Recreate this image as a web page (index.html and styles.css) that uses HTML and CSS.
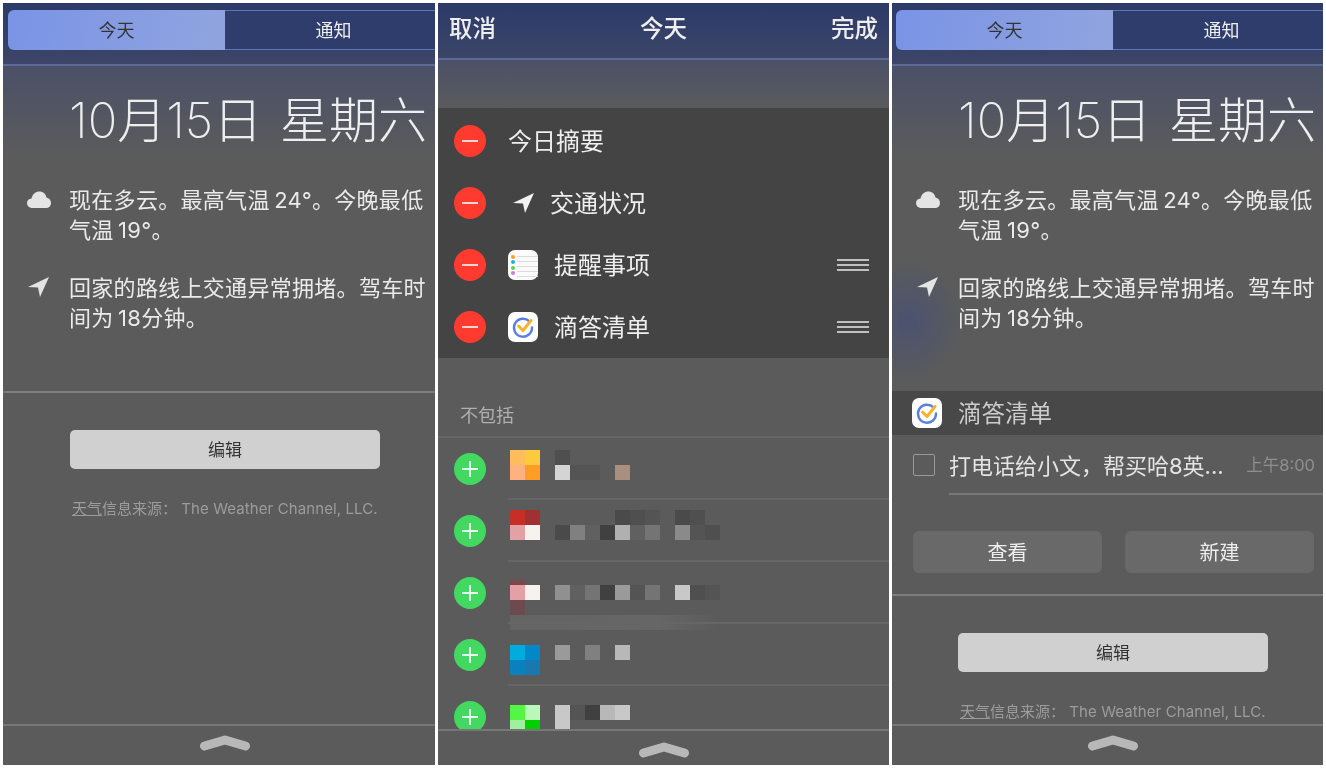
FILE: index.html
```html
<!DOCTYPE html>
<html lang="zh-CN">
    <head>
        <meta charset="UTF-8" />
        <meta name="viewport" content="width=device-width, initial-scale=1.0" />
        <link rel="stylesheet" href="styles.css">
        <title>今天</title>
    </head>
    <body>
        <svg class="defs" aria-hidden="true">
            <symbol id="arrow" viewBox="0 0 22 22"><path d="M22 1 L1 11 L11 11.5 L13 21 Z" /></symbol>
            <symbol id="cloud" viewBox="0 0 24 17"><path d="M6 17 C2.5 17 0 15 0 12 C0 9.5 2 7.6 4.5 7.5 C5.5 3 8.8 0.5 12.5 0.5 C16 0.5 18.8 2.8 19.5 6.5 C22 7 24 9 24 12 C24 15 21.8 17 19 17 Z" /></symbol>
            <symbol id="chevron" viewBox="0 0 52 17"><path d="M5.5 12 L26 6 L46.5 12" fill="none" stroke="#b8b8b8" stroke-width="9" stroke-linecap="round" stroke-linejoin="round" /></symbol>
            <symbol id="minus" viewBox="0 0 32 32"><circle cx="16" cy="16" r="16" fill="#ff3b30" /><rect x="8" y="15" width="16" height="2" fill="#ffd6d2" /></symbol>
            <symbol id="plus" viewBox="0 0 32 32"><circle cx="16" cy="16" r="16" fill="#43d85f" /><path d="M16 8 V24 M8 16 H24" stroke="#e6fbe9" stroke-width="2" /></symbol>
            <symbol id="ticktick" viewBox="0 0 30 30">
                <rect width="30" height="30" rx="7" fill="#fff" />
                <path d="M21.5 9.5 A9 9 0 1 0 24 15.5" fill="none" stroke="#5b7fe0" stroke-width="2.4" stroke-linecap="round" />
                <path d="M10.5 14 L15 18.5 L23 8.5" fill="none" stroke="#f7b329" stroke-width="3" stroke-linecap="round" stroke-linejoin="round" />
            </symbol>
            <symbol id="reminders" viewBox="0 0 30 30">
                <rect width="30" height="30" rx="7" fill="#fbfbfb" />
                <path d="M9 6.5 H30 M9 11.5 H30 M9 16.5 H30 M9 21.5 H30 M9 26.5 H30" stroke="#dcdcdc" stroke-width="1" />
                <circle cx="5" cy="7" r="2" fill="#ff9f1a" />
                <circle cx="5" cy="12" r="2" fill="#2aa8f2" />
                <circle cx="5" cy="18" r="2" fill="#5fd34a" />
                <circle cx="5" cy="23" r="2" fill="#cf7be0" />
            </symbol>
        </svg>

        <!-- today view -->
        <section class="panel">
            <header class="tabs-bar">
                <div class="tabs">
                    <div class="tab active">今天</div>
                    <div class="tab">通知</div>
                </div>
            </header>
            <h1 class="date">10月15日 星期六</h1>
            <div class="summary">
                <div class="summary-row">
                    <svg class="cloud-icon"><use href="#cloud" /></svg>
                    <p>现在多云。最高气温 24°。今晚最低<br />气温 19°。</p>
                </div>
                <div class="summary-row">
                    <svg class="arrow-icon"><use href="#arrow" /></svg>
                    <p>回家的路线上交通异常拥堵。驾车时<br />间为 18分钟。</p>
                </div>
            </div>
            <div class="edit-area first">
                <button class="edit-btn">编辑</button>
                <p class="source"><u>天气</u>信息来源： <span class="source-name">The Weather Channel, LLC.</span></p>
            </div>
            <footer class="grabber"><svg class="chevron"><use href="#chevron" /></svg></footer>
        </section>

        <!-- edit view -->
        <section class="panel editor">
            <header class="nav-bar">
                <span>取消</span>
                <span>今天</span>
                <span>完成</span>
            </header>
            <div class="nav-shade"></div>
            <div class="included">
                <div class="widget-row">
                    <svg class="round-btn"><use href="#minus" /></svg>
                    <span class="widget-name">今日摘要</span>
                </div>
                <div class="widget-row">
                    <svg class="round-btn"><use href="#minus" /></svg>
                    <svg class="row-arrow"><use href="#arrow" /></svg>
                    <span class="widget-name">交通状况</span>
                </div>
                <div class="widget-row">
                    <svg class="round-btn"><use href="#minus" /></svg>
                    <svg class="app-icon"><use href="#reminders" /></svg>
                    <span class="widget-name">提醒事项</span>
                    <span class="handle"></span>
                </div>
                <div class="widget-row">
                    <svg class="round-btn"><use href="#minus" /></svg>
                    <svg class="app-icon"><use href="#ticktick" /></svg>
                    <span class="widget-name">滴答清单</span>
                    <span class="handle"></span>
                </div>
            </div>
            <h2 class="excluded-title">不包括</h2>
            <div class="excluded">
                <div class="add-row">
                    <svg class="round-btn"><use href="#plus" /></svg>
                    <div class="mosaic top-12">
                        <i class="orange-a"></i><i class="orange-b"></i><i></i><i class="g4f"></i><i></i><i></i><i></i><i></i><i></i><i></i><i></i><i></i><i></i><i></i>
                        <i class="orange-c"></i><i class="orange-d"></i><i></i><i class="gd4"></i><i class="g54"></i><i class="g54"></i><i></i><i class="tan"></i>
                    </div>
                </div>
                <div class="add-row">
                    <svg class="round-btn"><use href="#plus" /></svg>
                    <div class="mosaic top-10">
                        <i class="red-a"></i><i class="red-b"></i><i></i><i></i><i></i><i></i><i></i><i class="g4a"></i><i class="g4f"></i><i class="g54"></i><i></i><i class="g4a"></i><i class="g4f"></i><i></i>
                        <i class="pink"></i><i class="cream"></i><i></i><i class="g4a"></i><i class="g80"></i><i class="g60"></i><i class="g40"></i><i class="gb0"></i><i class="g60"></i><i class="g70"></i><i></i><i class="g8a"></i><i class="g54"></i><i class="g4f"></i>
                    </div>
                </div>
                <div class="add-row">
                    <svg class="round-btn"><use href="#plus" /></svg>
                    <div class="mosaic top-8">
                        <i class="dim-red"></i><i></i><i></i><i></i><i></i><i></i><i></i><i></i><i></i><i></i><i></i><i></i><i></i><i></i>
                        <i class="pink"></i><i class="cream"></i><i></i><i class="g90"></i><i class="g60"></i><i class="g70"></i><i class="g40"></i><i class="g99"></i><i class="g54"></i><i class="g70"></i><i></i><i class="gc8"></i><i class="g4f"></i><i class="g54"></i>
                        <i class="dark-red"></i><i></i><i></i><i></i><i></i><i></i><i></i><i></i><i></i><i></i><i></i><i></i><i></i><i></i>
                        <i class="strip"></i>
                    </div>
                </div>
                <div class="add-row">
                    <svg class="round-btn"><use href="#plus" /></svg>
                    <div class="mosaic top-21">
                        <i class="blue-a"></i><i class="blue-b"></i><i></i><i class="g99"></i><i></i><i class="g80"></i><i></i><i class="gb8"></i><i></i><i></i><i></i><i></i><i></i><i></i>
                        <i class="blue-c"></i><i class="blue-d"></i>
                    </div>
                </div>
                <div class="add-row">
                    <svg class="round-btn"><use href="#plus" /></svg>
                    <div class="mosaic top-19">
                        <i class="green-a"></i><i class="green-b"></i><i></i><i class="gc8"></i><i class="g54"></i><i class="g40"></i><i class="gb8"></i><i class="gc8"></i><i></i><i></i><i></i><i></i><i></i><i></i>
                        <i class="green-c"></i><i class="green-d"></i><i></i><i class="gc8"></i>
                    </div>
                </div>
            </div>
            <footer class="grabber short"><svg class="chevron"><use href="#chevron" /></svg></footer>
        </section>

        <!-- today view with the added widget -->
        <section class="panel tinted">
            <header class="tabs-bar narrow">
                <div class="tabs">
                    <div class="tab active">今天</div>
                    <div class="tab">通知</div>
                </div>
            </header>
            <h1 class="date">10月15日 星期六</h1>
            <div class="summary">
                <div class="summary-row">
                    <svg class="cloud-icon"><use href="#cloud" /></svg>
                    <p>现在多云。最高气温 24°。今晚最低<br />气温 19°。</p>
                </div>
                <div class="summary-row">
                    <svg class="arrow-icon"><use href="#arrow" /></svg>
                    <p>回家的路线上交通异常拥堵。驾车时<br />间为 18分钟。</p>
                </div>
            </div>
            <div class="todo-head">
                <svg class="app-icon"><use href="#ticktick" /></svg>
                <span>滴答清单</span>
            </div>
            <div class="todo-row">
                <span class="checkbox"></span>
                <div class="todo-line">
                    <span class="todo-text">打电话给小文，帮买哈8英...</span>
                    <span class="todo-time">上午8:00</span>
                </div>
            </div>
            <div class="todo-actions">
                <button class="todo-btn">查看</button>
                <button class="todo-btn">新建</button>
            </div>
            <div class="edit-area">
                <button class="edit-btn">编辑</button>
                <p class="source"><u>天气</u>信息来源： <span class="source-name">The Weather Channel, LLC.</span></p>
            </div>
            <footer class="grabber"><svg class="chevron"><use href="#chevron" /></svg></footer>
        </section>
    </body>
</html>
```

FILE: styles.css
```css
* {
    margin: 0;
    padding: 0;
    box-sizing: border-box;
}
:root {
    --panel: #5b5b5b;
    --rule: #777;
    --navy: #2c3a69;
    --font-fam: 'Inter', 'Noto Sans CJK SC', sans-serif;
}
body {
    display: grid;
    grid-template-columns: 432px 451px 431px;
    gap: 3px;
    height: 768px;
    padding: 3px;
    background-color: #fff;
    font-family: var(--font-fam);
    color: #eee;
    overflow: hidden;
}
.defs {
    display: none;
}

/* ======= panel ======= */
.panel {
    display: flex;
    flex-direction: column;
    height: 762px;
    overflow: hidden;
    background: linear-gradient(#4a5068 62px, #5b5b5c 150px);
    filter: blur(0.3px);
}
.tinted {
    background:
        radial-gradient(ellipse 55px 60px at 15px 318px, #4a5270, transparent),
        linear-gradient(#4a5068 62px, #5b5b5c 150px);
}

/* tabs */
.tabs-bar {
    flex: none;
    height: 63px;
    padding: 7px 0 0 5px;
    background: linear-gradient(var(--navy), #3d4567);
    border-bottom: 2px solid #5b6a96;
}
.tabs-bar.narrow {
    padding-left: 4px;
}
.tabs {
    display: flex;
    width: 434px;
    height: 40px;
    font-size: 18px;
}
.tab {
    flex: 1;
    display: flex;
    justify-content: center;
    align-items: center;
    padding-bottom: 3px;
    background-color: #2f3d6d;
    border-block: 1px solid #5e74b8;
}
.tab.active {
    flex: 0 0 217px;
    color: #333;
    background: linear-gradient(100deg, #7a94e6, #90a4df);
    border: 0;
    border-radius: 6px 0 0 6px;
}

/* date and summary */
.date {
    flex: none;
    margin-top: 25px;
    padding-left: 66px;
    font-size: 49px;
    font-weight: 200;
    line-height: 60px;
    word-spacing: 4px;
    white-space: nowrap;
    color: #eee;
}
.summary {
    display: flex;
    flex-direction: column;
    gap: 28px;
    margin-top: 34px;
    font-size: 22px;
    letter-spacing: 0.3px;
    word-spacing: -2px;
    line-height: 30px;
    white-space: nowrap;
    color: #eaeaea;
}
.summary-row {
    display: flex;
    padding-left: 24px;
}
.summary-row svg {
    flex: none;
    fill: #e4e4e4;
}
.cloud-icon {
    width: 24px;
    height: 17px;
    margin: 6px 18px 0 0;
}
.arrow-icon {
    width: 22px;
    height: 22px;
    margin: 3px 20px 0 0;
    fill: #f4f4f4;
}

/* edit button and source line */
.edit-area {
    display: flex;
    flex-direction: column;
    padding: 37px 0 0 67px;
    border-top: 2px solid #7d7d7d;
}
.edit-area.first {
    margin-top: 58px;
}
.tinted .edit-area {
    padding-left: 66px;
}
.edit-btn {
    width: 310px;
    height: 39px;
    padding-bottom: 3px;
    border: 0;
    border-radius: 5px;
    background-color: #d0d0d0;
    color: #333;
    font-family: var(--font-fam);
    font-size: 17px;
}
.source {
    margin-top: 30px;
    padding-left: 2px;
    font-size: 15px;
    line-height: 20px;
    white-space: nowrap;
    color: #9c9c9c;
}
.source-name {
    letter-spacing: 0.1px;
}

/* grabber */
.grabber {
    flex: none;
    display: flex;
    justify-content: center;
    height: 41px;
    margin-top: auto;
    padding: 8px 0 0 11px;
    background-color: var(--panel);
    border-top: 2px solid var(--rule);
}
.grabber.short {
    height: 36px;
    padding: 10px 0 0;
    margin-top: 0;
}
.chevron {
    width: 52px;
    height: 17px;
}

/* ======= editor ======= */
.editor {
    background-color: var(--panel);
}
.nav-bar {
    flex: none;
    display: flex;
    justify-content: space-between;
    align-items: center;
    height: 57px;
    padding: 0 11px 8px;
    font-size: 23.5px;
    font-weight: 500;
    background: linear-gradient(var(--navy), #3b4567);
    border-bottom: 2px solid #5b6a96;
}
.nav-shade {
    flex: none;
    height: 48px;
    background: linear-gradient(#4a5068, #5b5b5c);
}
.included {
    flex: none;
    height: 250px;
    padding-top: 2px;
    background-color: #444;
}
.widget-row {
    display: flex;
    align-items: center;
    height: 62px;
    padding: 0 20px 0 16px;
    font-size: 24px;
    color: #eee;
}
.widget-name {
    padding-bottom: 4px;
}
.round-btn {
    flex: none;
    width: 32px;
    height: 32px;
    margin-right: 22px;
}
.row-arrow {
    width: 22px;
    height: 22px;
    margin: 0 16px 0 4px;
    fill: #f2f2f2;
}
.app-icon {
    flex: none;
    width: 30px;
    height: 30px;
    margin-right: 16px;
}
.handle {
    width: 32px;
    height: 12px;
    margin-left: auto;
    background: repeating-linear-gradient(#c0c0c0 0 2px, transparent 2px 5px);
}
.excluded-title {
    flex: none;
    height: 80px;
    padding: 47px 0 0 22px;
    font-size: 18px;
    font-weight: 400;
    line-height: 22px;
    color: #b0b0b0;
    border-bottom: 2px solid #666;
}
.excluded {
    flex: 1;
    min-height: 0;
    overflow: hidden;
}
.add-row {
    position: relative;
    display: flex;
    align-items: center;
    height: 62px;
    padding-left: 16px;
}
.add-row::after {
    content: '';
    position: absolute;
    left: 70px;
    right: 0;
    bottom: 0;
    height: 2px;
    background-color: #666;
}
.add-row .round-btn {
    margin-right: 24px;
}

/* pixelated app names */
.mosaic {
    align-self: flex-start;
    display: grid;
    grid-template-columns: repeat(14, 15px);
    grid-auto-rows: 15px;
}
.top-8 { margin-top: 8px; }
.top-10 { margin-top: 10px; }
.top-12 { margin-top: 12px; }
.top-19 { margin-top: 19px; }
.top-21 { margin-top: 21px; }
.strip {
    grid-column: 1 / -1;
    background: linear-gradient(90deg, #646464, #666 70%, transparent);
}
.g40 { background-color: #404040; }
.g4a { background-color: #4a4a4a; }
.g4f { background-color: #4f4f4f; }
.g54 { background-color: #545454; }
.g60 { background-color: #606060; }
.g70 { background-color: #747474; }
.g80 { background-color: #808080; }
.g8a { background-color: #8a8a8a; }
.g90 { background-color: #909090; }
.g99 { background-color: #9a9a9a; }
.gb0 { background-color: #b0b0b0; }
.gb8 { background-color: #b8b8b8; }
.gc8 { background-color: #c8c8c8; }
.gd4 { background-color: #d4d4d4; }
.tan { background-color: #a89080; }
.orange-a { background-color: #fdbd5c; }
.orange-b { background-color: #fdc93f; }
.orange-c { background-color: #ffb27f; }
.orange-d { background-color: #ff9d24; }
.red-a { background-color: #c62f26; }
.red-b { background-color: #a13032; }
.pink { background-color: #e3a0a5; }
.cream { background-color: #f6f3ee; }
.dim-red { background: linear-gradient(transparent 50%, #8a4040); }
.dark-red { background-color: #6d4a4d; }
.blue-a { background-color: #00acdc; }
.blue-b { background-color: #0088c8; }
.blue-c { background-color: #0a80c0; }
.blue-d { background-color: #1a78b0; }
.green-a { background-color: #55f545; }
.green-b { background-color: #b8f8b8; }
.green-c { background-color: #a0f0a0; }
.green-d { background-color: #00d000; }

/* ======= todo widget ======= */
.todo-head {
    flex: none;
    display: flex;
    align-items: center;
    height: 44px;
    margin-top: 58px;
    padding: 0 0 0 20px;
    font-size: 23.5px;
    color: #ccc;
    background-color: #484848;
}
.todo-head span {
    padding-bottom: 3px;
}
.todo-row {
    flex: none;
    display: flex;
    align-items: center;
    height: 60px;
    padding-left: 21px;
}
.checkbox {
    flex: none;
    width: 22px;
    height: 22px;
    margin-right: 14px;
    border: 1px solid #999;
    border-radius: 2px;
}
.todo-line {
    flex: 1;
    display: flex;
    justify-content: space-between;
    align-items: center;
    align-self: stretch;
    padding-right: 8px;
    border-bottom: 2px solid #777;
}
.todo-text {
    font-size: 22px;
    white-space: nowrap;
    color: #e4e4e4;
}
.todo-time {
    font-size: 16.5px;
    color: #8f8f8f;
}
.todo-actions {
    flex: none;
    display: flex;
    gap: 23px;
    padding: 36px 0 21px 21px;
}
.todo-btn {
    width: 189px;
    height: 42px;
    padding-bottom: 2px;
    border: 0;
    border-radius: 6px;
    background-color: #696969;
    color: #eee;
    font-family: var(--font-fam);
    font-size: 20px;
}
```
